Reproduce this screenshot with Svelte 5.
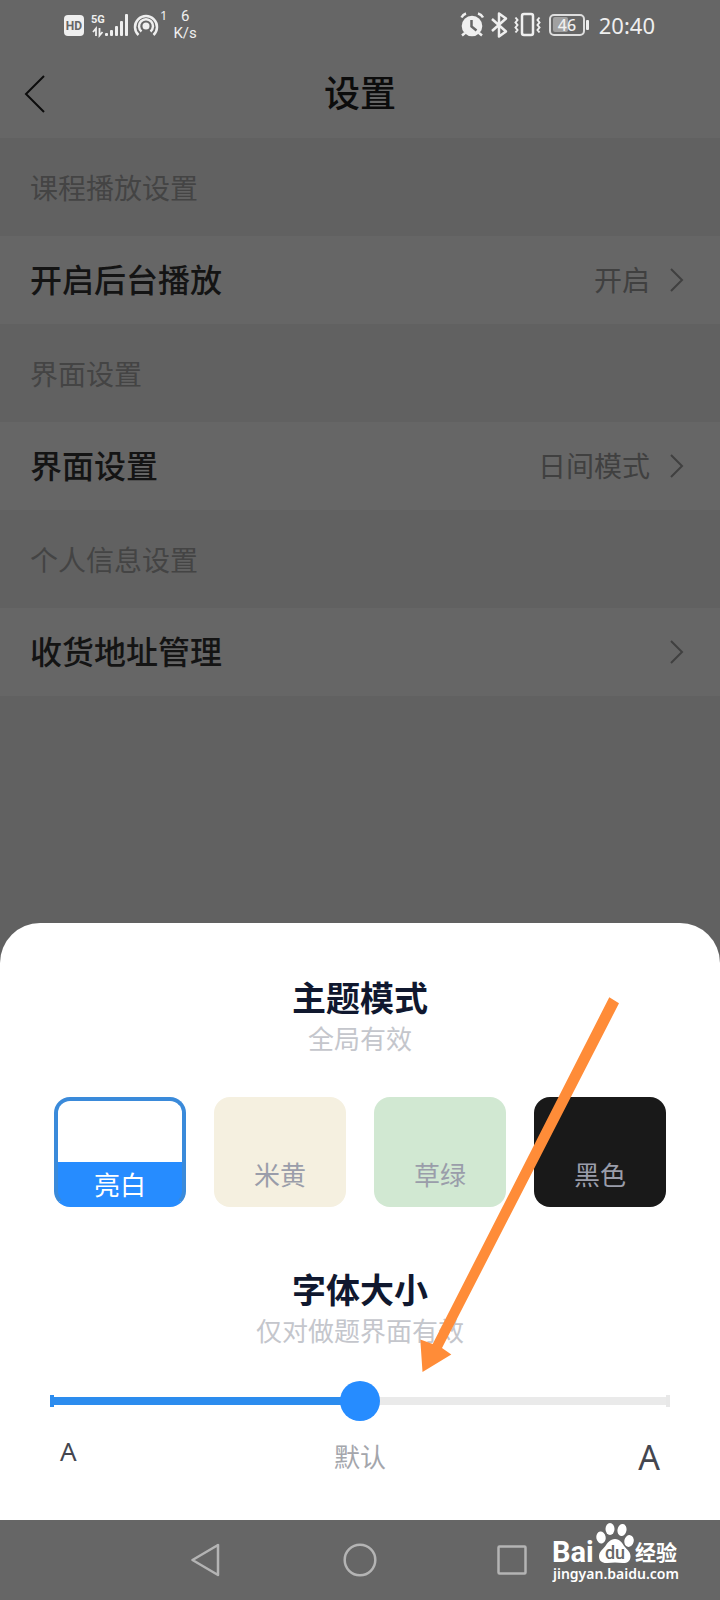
<script>
  const sections = [
    { title: '课程播放设置', item: '开启后台播放', value: '开启' },
    { title: '界面设置', item: '界面设置', value: '日间模式' },
    { title: '个人信息设置', item: '收货地址管理', value: '' }
  ];
  const themes = [
    { id: 'white', name: '亮白' },
    { id: 'cream', name: '米黄' },
    { id: 'green', name: '草绿' },
    { id: 'black', name: '黑色' }
  ];
  let theme = $state('white');
  let size = $state(2);
</script>

<div class="screen">
  <div class="status">
    <div class="group left">
      <svg width="96" height="34" viewBox="0 0 96 34" aria-hidden="true">
        <rect x="0" y="9" width="20" height="21" rx="4" fill="#efefef" />
        <text x="10" y="24" class="hd">HD</text>
        <text x="27" y="17" class="fiveg">5G</text>
        <path d="M32 30v-7.500l-3 3.500M35.500 22v7.500l3-3.500" fill="none" stroke="#efefef" stroke-width="1.800" />
        <g fill="#efefef">
          <rect x="41" y="27" width="3" height="3" rx="1" />
          <rect x="46" y="24" width="3" height="6" rx="1" />
          <rect x="51" y="20" width="3" height="10" rx="1" />
          <rect x="56" y="15" width="3" height="15" rx="1" />
          <rect x="61" y="8" width="3" height="22" rx="1" />
          <circle cx="82" cy="20" r="3.500" />
        </g>
        <g class="stroke">
          <path d="M77.500 25.500a7 7 0 1 1 9 0" />
          <path d="M74.500 29a11 11 0 1 1 15 0" />
        </g>
      </svg>
      <span class="one">1</span>
      <span class="speed">6<br />K/s</span>
    </div>
    <div class="group right">
      <svg width="130" height="30" viewBox="0 0 130 30" aria-hidden="true">
        <circle cx="12" cy="16" r="10.300" fill="#efefef" />
        <path d="M1.500 7.500Q3 4.500 6 3.500M18 3.500q3.500 1 5 4M5 23l-3 2.500M19 23l3 2.500" class="stroke" />
        <path d="M11.500 10v6.500l5 4" fill="none" stroke="#666" stroke-width="2.500" />
        <path d="M32 9l14 12.500-7 5V3.500l7 5L32 21" class="stroke" stroke-linejoin="round" />
        <rect x="62" y="4" width="11" height="21" rx="2" class="stroke" />
        <path d="M55.500 7.500l2 2.500-2 2.500 2 2.500-2 2.500 2 2.500-2 2.500M79.500 7.500l-2 2.500 2 2.500-2 2.500 2 2.500-2 2.500 2 2.500" class="thin" />
        <rect x="93" y="7" width="15" height="15" rx="2" fill="#a0a0a0" />
        <rect x="90" y="5" width="34" height="20" rx="4" fill="none" stroke="#dedede" stroke-width="2" />
        <rect x="126" y="10" width="3" height="10" rx="1" fill="#efefef" />
        <text x="107" y="21" class="battery">46</text>
      </svg>
      <time>20:40</time>
    </div>
  </div>

  <header>
    <button class="back" aria-label="返回">
      <svg width="22" height="40" viewBox="0 0 22 40"><path d="M20 2L2 20l18 18" fill="none" stroke="#0c0c0c" stroke-width="2" /></svg>
    </button>
    <h1>设置</h1>
  </header>

  <main>
    {#each sections as s}
      <h2 class="label">{s.title}</h2>
      <button class="row">
        <span class="name">{s.item}</span>
        <span class="value">{s.value}</span>
        <svg width="14" height="24" viewBox="0 0 14 24" aria-hidden="true"><path d="M1 1l11 11L1 23" fill="none" stroke="#404040" stroke-width="2" /></svg>
      </button>
    {/each}
  </main>

  <section class="sheet">
    <h2>主题模式</h2>
    <p>全局有效</p>
    <div class="themes" role="radiogroup" aria-label="主题模式">
      {#each themes as t}
        <label class="card {t.id}" class:selected={theme === t.id}>
          <input type="radio" name="theme" value={t.id} bind:group={theme} />
          <span>{t.name}</span>
        </label>
      {/each}
    </div>
    <h2>字体大小</h2>
    <p>仅对做题界面有效</p>
    <input class="slider" type="range" min="0" max="4" bind:value={size} aria-label="字体大小" style="--fill: {size * 25}%" />
    <div class="scale">
      <span class="small">A</span>
      <span class="mid">默认</span>
      <span class="big">A</span>
    </div>
    <svg class="arrow" width="200" height="380" viewBox="420 997 200 380" aria-hidden="true">
      <path d="M609.300 997.300L619 1003.300L442 1348L451.300 1354.500L422.500 1372L420.300 1339.500L432.700 1344Z" fill="#ff8c38" />
    </svg>
  </section>

  <nav>
    <button aria-label="返回"><svg width="34" height="34" viewBox="0 0 34 34"><path d="M27 2v30L1.500 17z" /></svg></button>
    <button aria-label="主页"><svg width="34" height="34" viewBox="0 0 34 34"><circle cx="17" cy="17" r="15.300" /></svg></button>
    <button aria-label="最近"><svg width="34" height="34" viewBox="0 0 34 34"><rect x="3.500" y="3.500" width="27" height="27" rx="1" /></svg></button>
    <svg class="mark" width="134" height="70" viewBox="0 0 134 70">
      <text x="0" y="42" class="bai">Bai</text>
      <g fill="#fff">
        <ellipse cx="49" cy="17.500" rx="4.700" ry="6" transform="rotate(-10 49 17.500)" />
        <ellipse cx="58" cy="9" rx="4.500" ry="6" />
        <ellipse cx="70" cy="10" rx="4.500" ry="6" transform="rotate(10 70 10)" />
        <ellipse cx="77" cy="21" rx="4.700" ry="6" transform="rotate(12 77 21)" />
        <path d="M63 19c5 0 7 4 9.500 7.500 3 3.500 6 5.500 6 10 0 5-4 7-8 6.500-5-.7-10-.7-15 0-5 .5-8.500-2-8.500-6.500s3-6.500 6-10C55.500 23 58 19 63 19z" />
      </g>
      <text x="63" y="39" class="du">du</text>
      <text x="83" y="40" class="exp">经验</text>
      <text x="1" y="59" class="site">jingyan.baidu.com</text>
    </svg>
  </nav>
</div>

<style>
  :global(body) { margin: 0; background: #616161; }
  .screen {
    min-height: 100vh;
    display: flex;
    flex-direction: column;
    background: #616161;
    font-family: "Noto Sans", "Noto Sans CJK SC", sans-serif;
  }
  button { border: 0; padding: 0; background: none; font: inherit; cursor: pointer; }
  h1, h2, p { margin: 0; font-weight: 400; }
  svg { display: block; flex: none; }

  .status {
    height: 50px;
    padding: 0 65px 0 64px;
    display: flex;
    justify-content: space-between;
    align-items: center;
    background: #666;
    color: #efefef;
  }
  .group { display: flex; align-items: center; }
  .left svg { margin-bottom: 4px; }
  .one { font: 13px/14px "Noto Sans", sans-serif; align-self: flex-start; margin-top: 2px; }
  .speed { margin-left: 6px; font: 15px/17px Roboto, sans-serif; text-align: center; }
  .right { gap: 9px; }
  time { font-size: 22px; line-height: 30px; }
  .stroke { fill: none; stroke: #efefef; stroke-width: 2.500; }
  .thin { fill: none; stroke: #efefef; stroke-width: 2; }
  .hd { font: 700 12px Roboto, sans-serif; fill: #666; text-anchor: middle; }
  .fiveg { font: 700 11px Roboto, sans-serif; fill: #efefef; }
  .battery { font: 500 16px "Noto Sans", sans-serif; fill: #efefef; text-anchor: middle; }

  header {
    height: 88px;
    padding: 0 24px;
    display: grid;
    grid-template-columns: 1fr auto 1fr;
    align-items: center;
    background: #666;
  }
  .back { justify-self: start; }
  h1 { font-size: 36px; line-height: 48px; font-weight: 500; color: #0c0c0c; }

  main { flex: 1; }
  .label { padding: 2px 30px 0; font-size: 28px; line-height: 96px; color: #444; }
  .row {
    width: 100%;
    height: 88px;
    padding: 0 36px 0 30px;
    display: flex;
    align-items: center;
    background: #666;
    text-align: left;
  }
  .name { flex: 1; font-size: 32px; line-height: 44px; font-weight: 500; color: #141414; }
  .value { margin-right: 20px; font-size: 28px; line-height: 44px; color: #404040; }

  .sheet {
    position: relative;
    padding: 52px 50px 43px;
    background: #fff;
    border-radius: 40px 40px 0 0;
    text-align: center;
  }
  .sheet h2 { font-size: 34px; line-height: 46px; font-weight: 700; color: #10182f; }
  .sheet p { font-size: 26px; line-height: 36px; color: #c4c6cc; }
  .themes {
    margin: 40px 4px 60px;
    display: grid;
    grid-template-columns: repeat(4, 1fr);
    gap: 28px;
  }
  .card {
    position: relative;
    box-sizing: border-box;
    height: 110px;
    display: flex;
    flex-direction: column;
    justify-content: flex-end;
    border-radius: 16px;
    overflow: hidden;
    color: #9a9daa;
    font-size: 26px;
    line-height: 44px;
    padding-bottom: 10px;
    cursor: pointer;
  }
  .card input { position: absolute; opacity: 0; margin: 0; }
  .white { background: #fff; }
  .cream { background: #f5f0e0; }
  .green { background: #d1e8d2; }
  .black { background: #191919; }
  .selected {
    border: 4px solid #3a8ada;
    border-bottom-color: #268cff;
    padding: 0;
    color: #fff;
    line-height: 36px;
    background: linear-gradient(#fff 60%, #268cff 60%);
  }

  .slider {
    appearance: none;
    display: block;
    width: 100%;
    height: 40px;
    margin: 32px 0 0;
    background:
      linear-gradient(#2c8cee, #2c8cee) 0 50% / 4px 12px no-repeat,
      linear-gradient(#e8e8e8, #e8e8e8) 100% 50% / 4px 12px no-repeat,
      linear-gradient(90deg, #2c8cee var(--fill), #eaeaea var(--fill)) 0 50% / 100% 8px no-repeat;
  }
  .slider::-webkit-slider-thumb {
    appearance: none;
    width: 40px;
    height: 40px;
    border-radius: 50%;
    background: #268cff;
  }
  .scale {
    padding: 16px 10px 0;
    display: grid;
    grid-template-columns: 1fr auto 1fr;
    align-items: start;
    line-height: 40px;
    color: #44464f;
  }
  .small { font-size: 26px; line-height: 28px; text-align: left; }
  .mid { font-size: 26px; color: #a4a6ac; }
  .big { font-size: 34px; text-align: right; }
  .arrow { position: absolute; top: 74px; left: calc(50% + 60px); pointer-events: none; }

  nav {
    position: relative;
    height: 80px;
    display: flex;
    justify-content: center;
    background: #666;
  }
  nav button { width: 152px; display: grid; place-items: center; }
  nav button svg { fill: none; stroke: #b4b4b4; stroke-width: 2.500; stroke-linejoin: round; }
  .mark { position: absolute; right: 34px; top: 0; fill: #fff; }
  .bai { font: 700 29px Roboto, sans-serif; }
  .du { font: 500 18px Roboto, sans-serif; fill: #666; text-anchor: middle; }
  .exp { font: 700 21px "Noto Sans CJK SC", sans-serif; }
  .site { font: 600 14px "Noto Sans", sans-serif; }
</style>
